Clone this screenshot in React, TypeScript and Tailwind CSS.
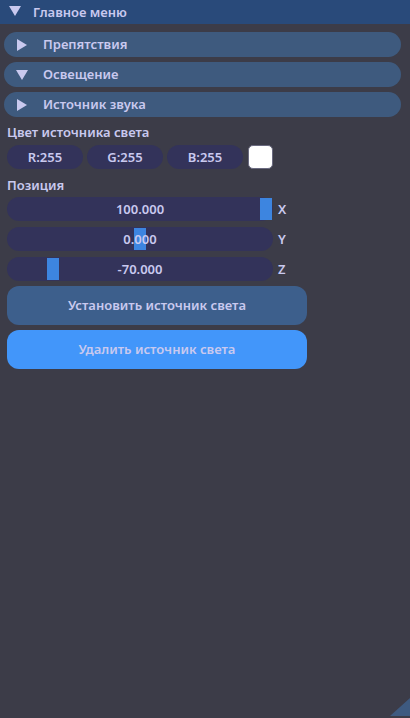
import React from "react";

const Tri = ({ down }: { down?: boolean }) =>
  down ? (
    <svg width="12" height="10" viewBox="0 0 12 10" className="shrink-0">
      <polygon points="0,0 12,0 6,10" fill="#c9c9ef" />
    </svg>
  ) : (
    <svg width="10" height="12" viewBox="0 0 10 12" className="shrink-0">
      <polygon points="0,0 10,6 0,12" fill="#c9c9ef" />
    </svg>
  );

const Header = ({ label, down }: { label: string; down?: boolean }) => (
  <div className="h-[25px] rounded-full bg-[#3e5a7e] flex items-center">
    <div className={down ? "ml-[11px] w-[14px] flex justify-center" : "ml-[13px] w-[12px] flex"}>
      <Tri down={down} />
    </div>
    <span className="ml-[14px]">{label}</span>
  </div>
);

const Slider = ({ value, grab, axis }: { value: string; grab: number; axis: string }) => (
  <div className="flex items-center">
    <div className="relative w-[266px] h-[24px] rounded-full bg-[#33335a] flex items-center justify-center">
      <div
        className="absolute top-[1px] h-[22px] w-[12px] bg-[#3d85e0]"
        style={{ left: grab }}
      />
      <span className="relative">{value}</span>
    </div>
    <span className="ml-[5px]">{axis}</span>
  </div>
);

export default function App() {
  return (
    <div
      className="relative w-[410px] h-[718px] bg-[#3c3c48] overflow-hidden text-[13px] font-semibold text-[#c9c9ef] leading-none"
      style={{ fontFamily: '"Noto Sans", "Open Sans", sans-serif' }}
    >
      <div className="h-[24px] bg-[#294a7a] flex items-center">
        <div className="ml-[9px] mt-[-2px]">
          <Tri down />
        </div>
        <span className="ml-[12px]">Главное меню</span>
      </div>
      <div className="px-[4px] pt-[8px] flex flex-col gap-[5px] w-[405px]">
        <Header label="Препятствия" />
        <Header label="Освещение" down />
        <Header label="Источник звука" />
      </div>
      <div className="px-[7px]">
        <div className="h-[16px] mt-[7px] flex items-center">Цвет источника света</div>
        <div className="mt-[5px] flex items-center gap-[4px]">
          <div className="w-[76px] h-[24px] rounded-full bg-[#33335a] flex items-center justify-center">R:255</div>
          <div className="w-[76px] h-[24px] rounded-full bg-[#33335a] flex items-center justify-center">G:255</div>
          <div className="w-[76px] h-[24px] rounded-full bg-[#33335a] flex items-center justify-center">B:255</div>
          <div className="ml-[1px] w-[25px] h-[24px] rounded-[5px] bg-white border border-[#6a6a80]" />
        </div>
        <div className="h-[16px] mt-[8px] flex items-center">Позиция</div>
        <div className="mt-[4px] flex flex-col gap-[6px]">
          <Slider value="100.000" grab={253} axis="X" />
          <Slider value="0.000" grab={127} axis="Y" />
          <Slider value="-70.000" grab={40} axis="Z" />
        </div>
        <div className="mt-[5px] flex flex-col gap-[5px]">
          <div className="w-[300px] h-[39px] rounded-[12px] bg-[#3d5f8c] flex items-center justify-center">
            Установить источник света
          </div>
          <div className="w-[300px] h-[39px] rounded-[12px] bg-[#4296fa] flex items-center justify-center">
            Удалить источник света
          </div>
        </div>
      </div>
      <svg className="absolute right-0 bottom-0" width="22" height="22" viewBox="0 0 22 22">
        <polygon points="22,2 22,20 2,20" fill="#3e5a80" />
      </svg>
    </div>
  );
}
